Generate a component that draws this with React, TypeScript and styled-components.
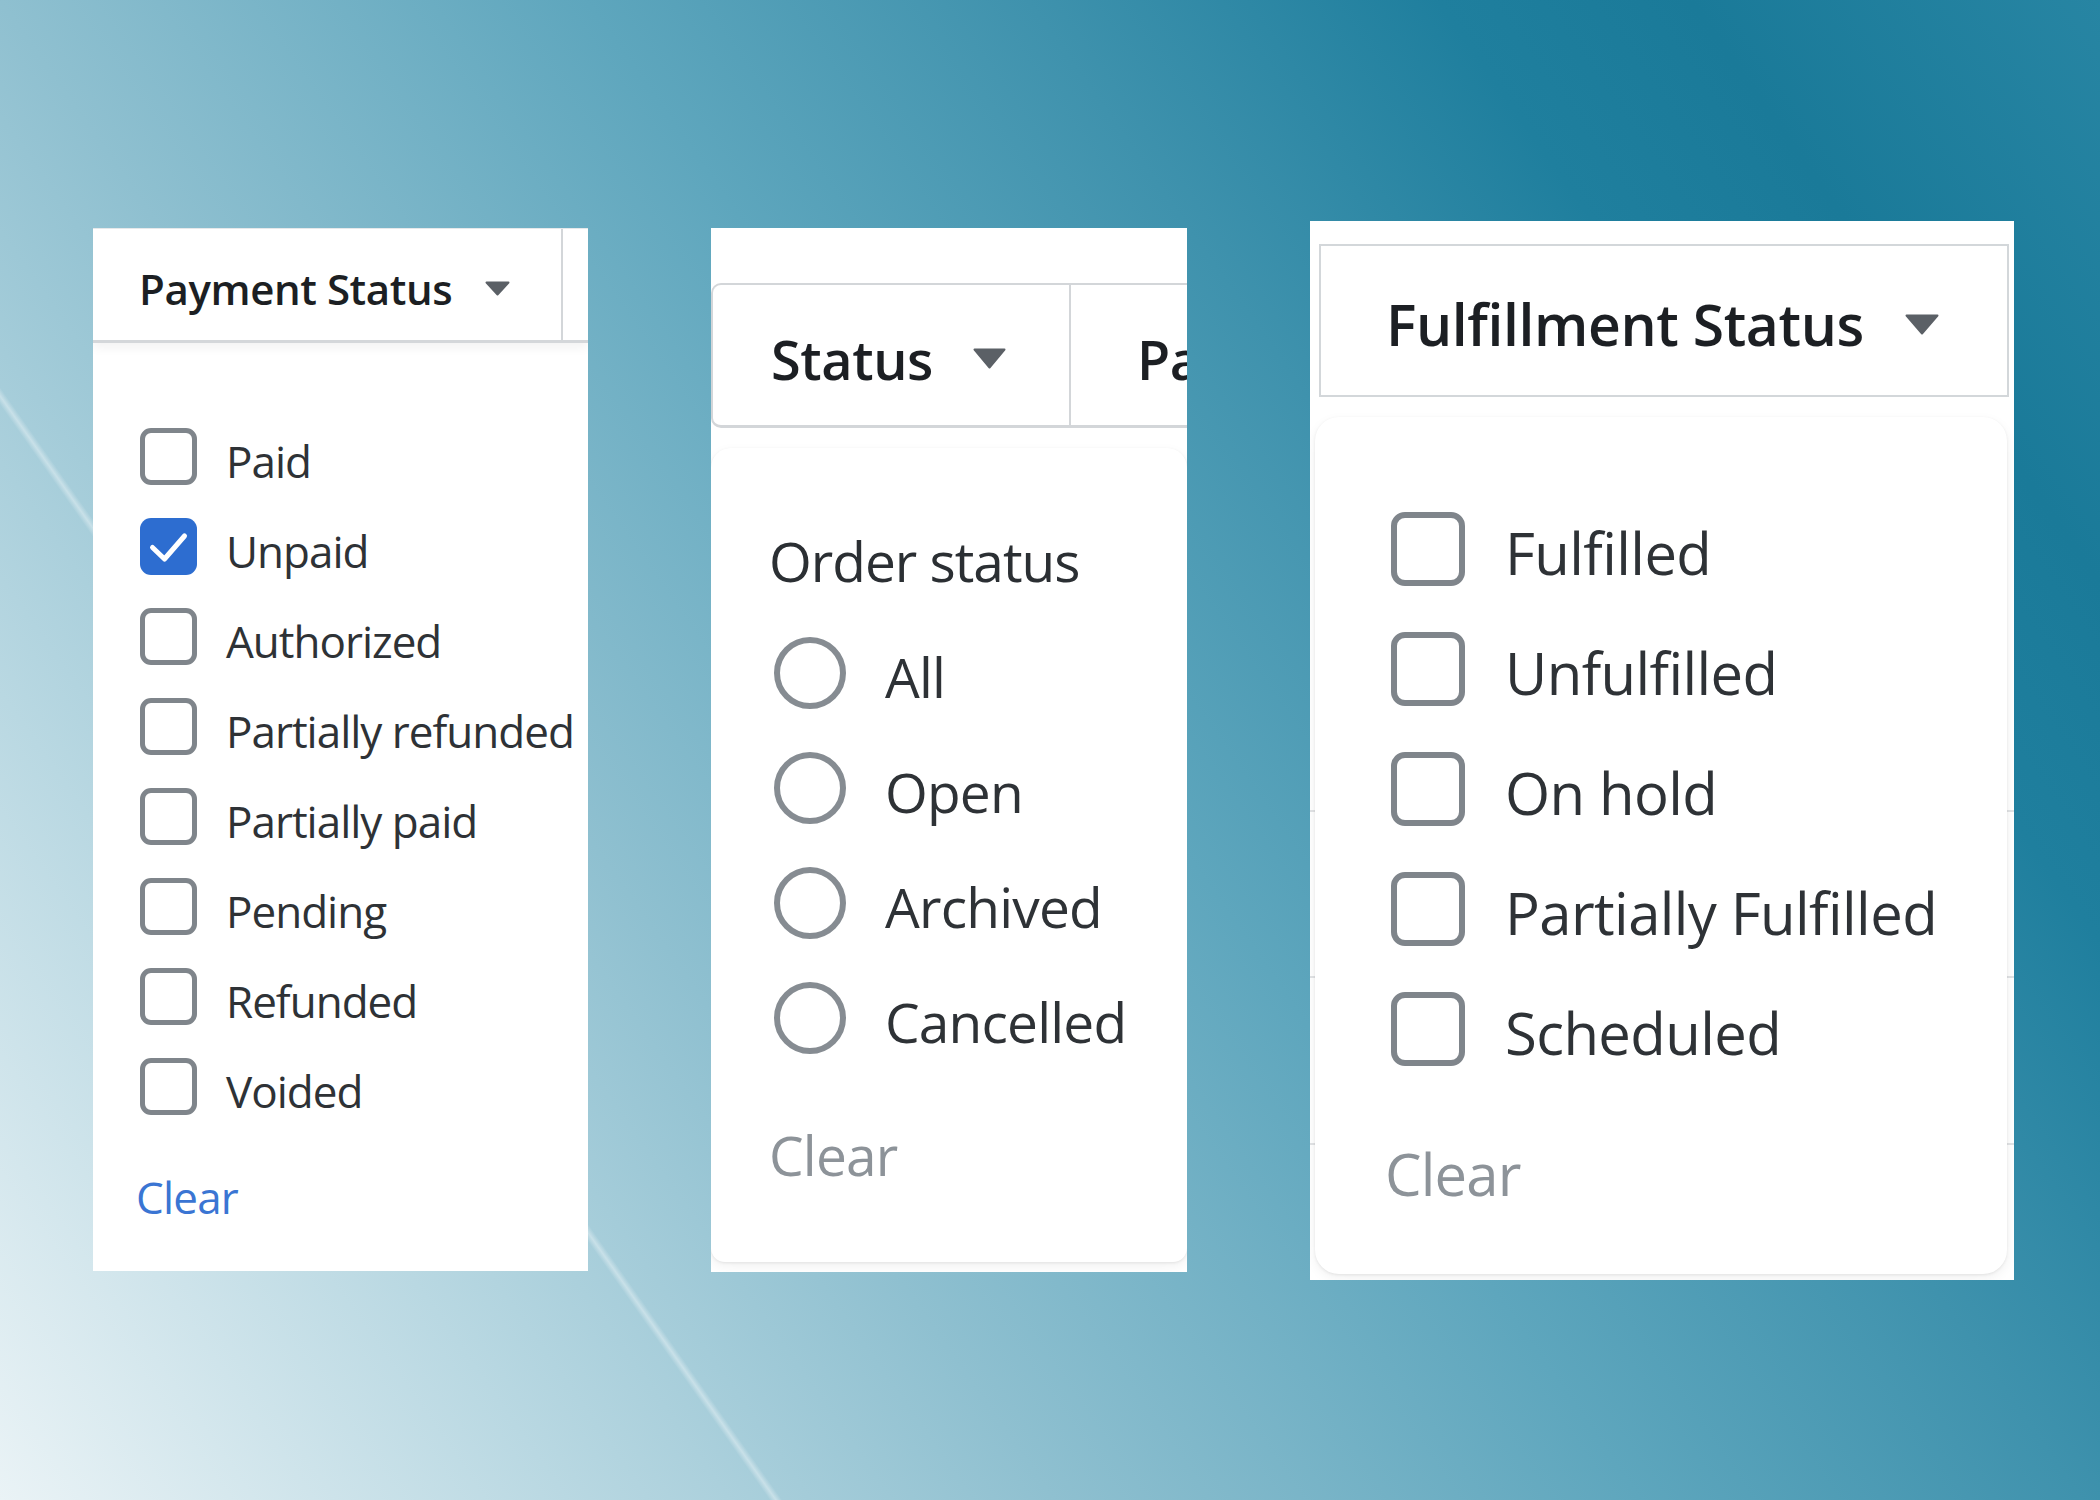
import React from "react";
import styled, { createGlobalStyle } from "styled-components";

const GlobalStyle = createGlobalStyle`
  html, body { margin: 0; padding: 0; }
  body { font-family: "Open Sans", "Noto Sans", sans-serif; }
  * { box-sizing: border-box; }
`;

const Page = styled.div`
  width: 2100px;
  height: 1500px;
  overflow: hidden;
  display: flex;
  align-items: flex-start;
  gap: 123px;
  padding: 221px 0 0 93px;
  background:
    linear-gradient(54.9deg, transparent 24.4%, rgba(255, 255, 255, 0.38) 24.6%, transparent 24.8%),
    linear-gradient(54.9deg, #eaf3f6 0%, #b9d8e2 18%, #8fc0d0 33.4%, #5ea6bd 52%, #3f92ad 66%, #1f7f9e 79%, #1a7a99 87%, #2785a3 100%);
`;

const Panel = styled.section<{ $w: number; $h: number; $top: number; $ticks?: boolean }>`
  width: ${(p) => p.$w}px;
  height: ${(p) => p.$h}px;
  margin-top: ${(p) => p.$top}px;
  flex: none;
  display: flex;
  flex-direction: column;
  overflow: hidden;
  background-color: #ffffff;
  ${(p) =>
    p.$ticks
      ? `background-image: linear-gradient(#e1e3e5, #e1e3e5), linear-gradient(#e1e3e5, #e1e3e5), linear-gradient(#e1e3e5, #e1e3e5);
         background-repeat: no-repeat;
         background-size: 100% 2px;
         background-position: 0 589px, 0 755px, 0 922px;`
      : ""}
`;

/* ---------- headers ---------- */

const FlatHeader = styled.div`
  height: 115px;
  flex: none;
  display: flex;
  border-top: 1px solid #e6e8ea;
  border-bottom: 3px solid #d4d7da;
  box-shadow: 0 5px 10px rgba(0, 0, 0, 0.05);
`;

const TabHeader = styled.div`
  height: 145px;
  margin-top: 55px;
  flex: none;
  display: flex;
  border: 2px solid #d3d6d9;
  border-right: none;
  border-bottom-width: 3px;
  border-radius: 10px 0 0 10px;
`;

const BoxHeader = styled.div`
  height: 153px;
  margin: 23px 5px 0 9px;
  flex: none;
  display: flex;
  border: 2px solid #d3d7da;
`;

const HeaderCell = styled.div<{ $w?: number; $pl: number; $divider?: boolean }>`
  ${(p) => (p.$w ? `width: ${p.$w}px; flex: none;` : "flex: 1; min-width: 0;")}
  display: flex;
  align-items: center;
  padding-left: ${(p) => p.$pl}px;
  border-right: ${(p) => (p.$divider ? "2px solid #d3d6d9" : "none")};
  white-space: nowrap;
  overflow: hidden;
`;

const HeaderTitle = styled.span<{ $size: number; $ls?: number }>`
  font-size: ${(p) => p.$size}px;
  line-height: 1;
  font-weight: 600;
  color: #1c1f23;
  padding-top: 8px;
  letter-spacing: ${(p) => p.$ls ?? -0.4}px;
`;

const CaretBox = styled.svg<{ $mr: number }>`
  flex: none;
  margin-left: auto;
  margin-right: ${(p) => p.$mr}px;
  margin-top: 7px;
`;

const Caret = ({ w, h, mr }: { w: number; h: number; mr: number }) => (
  <CaretBox $mr={mr} width={w} height={h} viewBox={`0 0 ${w} ${h}`}>
    <path
      d={`M1.5 1.5 H${w - 1.5} L${w / 2} ${h - 1.5} Z`}
      fill="#5b6066"
      stroke="#5b6066"
      strokeWidth={2}
      strokeLinejoin="round"
    />
  </CaretBox>
);

/* ---------- dropdown bodies ---------- */

const PlainBody = styled.div<{ $pt: number; $pl: number }>`
  flex: 1;
  display: flex;
  flex-direction: column;
  padding: ${(p) => p.$pt}px 0 0 ${(p) => p.$pl}px;
`;

const Card = styled.div<{ $margin: string; $pt: number; $pl: number; $radius: string }>`
  flex: 1;
  display: flex;
  flex-direction: column;
  margin: ${(p) => p.$margin};
  padding: ${(p) => p.$pt}px 0 0 ${(p) => p.$pl}px;
  border-radius: ${(p) => p.$radius};
  background: #ffffff;
  box-shadow: 0 1px 3px rgba(0, 0, 0, 0.08), 0 4px 12px rgba(0, 0, 0, 0.06);
`;

const SectionTitle = styled.div<{ $size: number }>`
  font-size: ${(p) => p.$size}px;
  line-height: 1;
  color: #2b2f33;
  letter-spacing: -1px;
  margin-bottom: 27px;
`;

const OptionList = styled.div`
  display: flex;
  flex-direction: column;
`;

const OptionRow = styled.label<{ $h: number }>`
  height: ${(p) => p.$h}px;
  display: flex;
  align-items: center;
`;

const CheckBox = styled.span<{ $size: number; $bw: number; $r: number; $checked?: boolean }>`
  flex: none;
  width: ${(p) => p.$size}px;
  height: ${(p) => p.$size}px;
  border-radius: ${(p) => p.$r}px;
  border: ${(p) => (p.$checked ? `0` : `${p.$bw}px solid #7f858b`)};
  background: ${(p) => (p.$checked ? "#2d6dd0" : "#ffffff")};
  display: flex;
  align-items: center;
  justify-content: center;
`;

const RadioCircle = styled.span<{ $size: number; $bw: number; $ml: number }>`
  flex: none;
  width: ${(p) => p.$size}px;
  height: ${(p) => p.$size}px;
  margin-left: ${(p) => p.$ml}px;
  border-radius: 50%;
  border: ${(p) => p.$bw}px solid #868c92;
  background: #ffffff;
`;

const OptionText = styled.span<{ $size: number; $ml: number; $pt: number; $ls?: number }>`
  font-size: ${(p) => p.$size}px;
  line-height: 1;
  margin-left: ${(p) => p.$ml}px;
  padding-top: ${(p) => p.$pt}px;
  color: #2e3236;
  letter-spacing: ${(p) => p.$ls ?? -1}px;
  white-space: nowrap;
`;

const ClearLink = styled.div<{ $size: number; $mt: number; $ml: number; $muted?: boolean }>`
  font-size: ${(p) => p.$size}px;
  line-height: 1;
  margin-top: ${(p) => p.$mt}px;
  margin-left: ${(p) => p.$ml}px;
  color: ${(p) => (p.$muted ? "#8d9399" : "#3a75d3")};
  letter-spacing: -0.8px;
`;

const CheckMark = () => (
  <svg width="57" height="57" viewBox="0 0 57 57">
    <path d="M12.5 29.5 L24.5 41 L44.5 18" fill="none" stroke="#ffffff" strokeWidth="5" strokeLinecap="round" strokeLinejoin="round" />
  </svg>
);

const payment = ["Paid", "Unpaid", "Authorized", "Partially refunded", "Partially paid", "Pending", "Refunded", "Voided"];
const orders = ["All", "Open", "Archived", "Cancelled"];
const fulfillment = ["Fulfilled", "Unfulfilled", "On hold", "Partially Fulfilled", "Scheduled"];

export default function App() {
  return (
    <>
      <GlobalStyle />
      <Page>
        <Panel $w={495} $h={1043} $top={7}>
          <FlatHeader>
            <HeaderCell $w={470} $pl={46} $divider>
              <HeaderTitle $size={42}>Payment Status</HeaderTitle>
              <Caret w={25} h={15} mr={51} />
            </HeaderCell>
            <HeaderCell $pl={0} />
          </FlatHeader>
          <PlainBody $pt={68.5} $pl={47}>
            <OptionList>
              {payment.map((p) => (
                <OptionRow key={p} $h={90}>
                  <CheckBox $size={57} $bw={5} $r={11} $checked={p === "Unpaid"}>
                    {p === "Unpaid" && <CheckMark />}
                  </CheckBox>
                  <OptionText $size={44} $ml={29} $pt={9}>{p}</OptionText>
                </OptionRow>
              ))}
            </OptionList>
            <ClearLink $size={44} $mt={43.5} $ml={-4}>Clear</ClearLink>
          </PlainBody>
        </Panel>

        <Panel $w={476} $h={1044} $top={7}>
          <TabHeader>
            <HeaderCell $w={358} $pl={58} $divider>
              <HeaderTitle $size={54}>Status</HeaderTitle>
              <Caret w={33} h={21} mr={63} />
            </HeaderCell>
            <HeaderCell $pl={66}>
              <HeaderTitle $size={54}>Payment Status</HeaderTitle>
            </HeaderCell>
          </TabHeader>
          <Card $margin="20px 0 10px 0" $pt={85} $pl={58} $radius="20px 20px 14px 14px">
            <SectionTitle $size={55}>Order status</SectionTitle>
            <OptionList>
              {orders.map((o) => (
                <OptionRow key={o} $h={115}>
                  <RadioCircle $size={72} $bw={6} $ml={5} />
                  <OptionText $size={55} $ml={39} $pt={7} $ls={-0.8}>{o}</OptionText>
                </OptionRow>
              ))}
            </OptionList>
            <ClearLink $size={55} $mt={52} $ml={0} $muted>Clear</ClearLink>
          </Card>
        </Panel>

        <Panel $w={704} $h={1059} $top={0} $ticks>
          <BoxHeader>
            <HeaderCell $pl={65}>
              <HeaderTitle $size={57} $ls={-0.4}>Fulfillment Status</HeaderTitle>
              <Caret w={34} h={21} mr={68} />
            </HeaderCell>
          </BoxHeader>
          <Card $margin="20px 7px 6px 5px" $pt={72} $pl={76} $radius="24px">
            <OptionList>
              {fulfillment.map((f) => (
                <OptionRow key={f} $h={120}>
                  <CheckBox $size={74} $bw={6} $r={14} />
                  <OptionText $size={58} $ml={40} $pt={7} $ls={-0.6}>{f}</OptionText>
                </OptionRow>
              ))}
            </OptionList>
            <ClearLink $size={58} $mt={55.5} $ml={-6} $muted>Clear</ClearLink>
          </Card>
        </Panel>
      </Page>
    </>
  );
}
